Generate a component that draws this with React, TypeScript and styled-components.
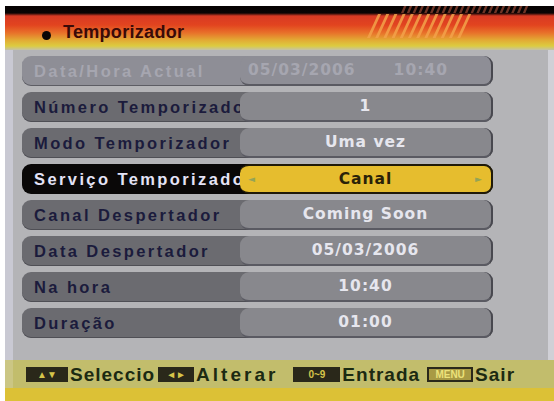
import React from "react";
import styled, { createGlobalStyle } from "styled-components";

const GlobalStyle = createGlobalStyle`
  html, body {
    margin: 0;
    padding: 0;
    background: #ffffff;
  }
`;

type Tone = "dim" | "normal" | "active";

const Screen = styled.div`
  margin: 6px 0 0 5px;
  width: 549px;
  height: 395px;
  display: flex;
  flex-direction: column;
  font-family: "Liberation Sans", Arial, sans-serif;
  font-weight: bold;
  overflow: hidden;
`;

const Header = styled.div`
  position: relative;
  flex: 0 0 44px;
  display: flex;
  align-items: center;
  padding: 8px 0 0 37px;
  box-sizing: border-box;
  gap: 12px;
  background: linear-gradient(
    to bottom,
    #050202 0px,
    #0a0404 7px,
    #d83a24 10px,
    #e2441f 19px,
    #e8722a 27px,
    #e2aa34 34px,
    #dccc40 40px,
    #c4c2a8 44px
  );
`;

const Dot = styled.span`
  width: 9px;
  height: 9px;
  border-radius: 50%;
  background: #0c0606;
  margin-top: 6px;
`;

const Title = styled.span`
  font-size: 18px;
  color: #3a0a08;
  letter-spacing: 0.3px;
`;

const Hatch = styled.svg`
  position: absolute;
  left: 0;
  top: 0;
  pointer-events: none;
`;

const Panel = styled.div`
  flex: 0 0 310px;
  box-sizing: border-box;
  background: #b4b4b7;
  border-left: 8px solid #c9c9d3;
  border-right: 6px solid #d0d0d6;
  padding: 6px 0 0 9px;
  display: flex;
  flex-direction: column;
  gap: 6px;
`;

const Row = styled.div<{ $tone: Tone }>`
  width: 471px;
  height: 30px;
  display: flex;
  border-radius: 9px;
  background: ${(p) =>
    p.$tone === "active" ? "#0a0808" : p.$tone === "dim" ? "#8e8e96" : "#6b6b70"};
  box-shadow: ${(p) =>
    p.$tone === "active" ? "none" : "inset 0 -1px 0 rgba(60, 60, 66, 0.6)"};
`;

const Label = styled.div<{ $tone: Tone }>`
  width: 206px;
  padding-left: 12px;
  display: flex;
  align-items: center;
  white-space: nowrap;
  overflow: hidden;
  font-size: 16.5px;
  letter-spacing: 2.4px;
  color: ${(p) =>
    p.$tone === "active" ? "#e4e3f6" : p.$tone === "dim" ? "#a6a6b0" : "#1b1b3c"};
`;

const Value = styled.div<{ $tone: Tone }>`
  flex: 1;
  position: relative;
  border-radius: 9px;
  display: flex;
  align-items: center;
  justify-content: ${(p) => (p.$tone === "dim" ? "flex-start" : "center")};
  padding-left: ${(p) => (p.$tone === "dim" ? "8px" : "0")};
  gap: 38px;
  font-family: "DejaVu Sans", "Liberation Sans", sans-serif;
  font-size: 15.5px;
  letter-spacing: 1px;
  box-sizing: border-box;
  background: ${(p) =>
    p.$tone === "active" ? "#e6bd2e" : p.$tone === "dim" ? "#8e8e96" : "#88888d"};
  color: ${(p) =>
    p.$tone === "active" ? "#2a2208" : p.$tone === "dim" ? "#a6a6b0" : "#e6e6ee"};
  border-right: 2px solid
    ${(p) => (p.$tone === "active" ? "#201a08" : "#48484f")};
  border-bottom: 2px solid
    ${(p) => (p.$tone === "active" ? "#201a08" : "#5a5a62")};
  border-top: ${(p) => (p.$tone === "active" ? "2px solid #201a08" : "none")};
`;

const Arrow = styled.span<{ $side: "left" | "right" }>`
  position: absolute;
  top: 50%;
  ${(p) => (p.$side === "left" ? "left: 8px;" : "right: 9px;")}
  transform: translateY(-50%);
  font-size: 9px;
  color: #94a456;
  letter-spacing: 0;
`;

const Footer = styled.div`
  flex: 1;
  display: flex;
  flex-direction: column;
`;

const KeyBar = styled.div`
  flex: 0 0 28px;
  background: #c2bd6c;
  border-left: 8px solid #cbc684;
  display: flex;
  align-items: center;
  padding-left: 13px;
  box-sizing: border-box;
`;

const BottomBand = styled.div`
  flex: 1;
  background: #dcc136;
`;

const Hint = styled.div<{ $gap: number }>`
  display: flex;
  align-items: center;
  gap: 2px;
  margin-right: ${(p) => p.$gap}px;
`;

const Key = styled.span<{ $w: number; $lit?: boolean }>`
  width: ${(p) => p.$w}px;
  height: 15px;
  box-sizing: border-box;
  background: ${(p) => (p.$lit ? "#a89a44" : "#2a281a")};
  border: 2px solid #2a281a;
  color: ${(p) => (p.$lit ? "#ece27a" : "#d6c44a")};
  display: flex;
  align-items: center;
  justify-content: center;
  font-size: 10px;
  letter-spacing: 0;
`;

const HintText = styled.span<{ $ls?: number }>`
  font-size: 19px;
  letter-spacing: ${(p) => p.$ls ?? 1}px;
  color: #1c2a12;
  line-height: 1;
`;

const rows: { label: string; values: string[]; tone: Tone }[] = [
  { label: "Data/Hora Actual", values: ["05/03/2006", "10:40"], tone: "dim" },
  { label: "Número Temporizador", values: ["1"], tone: "normal" },
  { label: "Modo Temporizador", values: ["Uma vez"], tone: "normal" },
  { label: "Serviço Temporizador", values: ["Canal"], tone: "active" },
  { label: "Canal Despertador", values: ["Coming Soon"], tone: "normal" },
  { label: "Data Despertador", values: ["05/03/2006"], tone: "normal" },
  { label: "Na hora", values: ["10:40"], tone: "normal" },
  { label: "Duração", values: ["01:00"], tone: "normal" },
];

const HeaderStripes: React.FC = () => {
  const orange = Array.from({ length: 12 }, (_, i) => 362 + i * 8.2);
  const dark = Array.from({ length: 22 }, (_, i) => 396 + i * 5.8);
  return (
    <Hatch width="549" height="44" viewBox="0 0 549 44">
      {orange.map((x, i) => (
        <polygon
          key={`o${i}`}
          points={`${x},32 ${x + 3},32 ${x + 14},8 ${x + 11},8`}
          fill="#f2a24a"
          opacity="0.85"
        />
      ))}
      {dark.map((x, i) => (
        <polygon
          key={`d${i}`}
          points={`${x},7 ${x + 2.5},7 ${x + 5.5},0 ${x + 3},0`}
          fill="#7a3a2a"
          opacity="0.9"
        />
      ))}
    </Hatch>
  );
};

const App: React.FC = () => {
  return (
    <>
      <GlobalStyle />
      <Screen>
        <Header>
          <HeaderStripes />
          <Dot />
          <Title>Temporizador</Title>
        </Header>
        <Panel>
          {rows.map((r) => (
            <Row key={r.label} $tone={r.tone}>
              <Label $tone={r.tone}>{r.label}</Label>
              <Value $tone={r.tone}>
                {r.tone === "active" && <Arrow $side="left">◄</Arrow>}
                {r.values.map((v) => (
                  <span key={v}>{v}</span>
                ))}
                {r.tone === "active" && <Arrow $side="right">►</Arrow>}
              </Value>
            </Row>
          ))}
        </Panel>
        <Footer>
          <KeyBar>
            <Hint $gap={3}>
              <Key $w={42}>▲▼</Key>
              <HintText>Seleccio</HintText>
            </Hint>
            <Hint $gap={15}>
              <Key $w={36}>◄►</Key>
              <HintText $ls={3}>Alterar</HintText>
            </Hint>
            <Hint $gap={7}>
              <Key $w={47}>0~9</Key>
              <HintText>Entrada</HintText>
            </Hint>
            <Hint $gap={0}>
              <Key $w={46} $lit>
                MENU
              </Key>
              <HintText>Sair</HintText>
            </Hint>
          </KeyBar>
          <BottomBand />
        </Footer>
      </Screen>
    </>
  );
};

export default App;
